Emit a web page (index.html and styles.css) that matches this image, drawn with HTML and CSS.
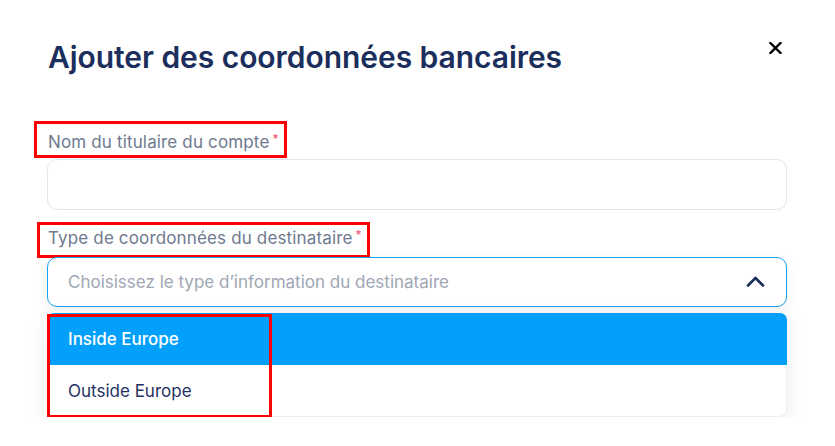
FILE: index.html
```html
<!DOCTYPE html>
<html lang="fr">
<head>
<meta charset="utf-8">
<title>Ajouter des coordonnées bancaires</title>
<link rel="stylesheet" href="styles.css">
</head>
<body>
<div class="modal">
  <div class="header">
    <h1 class="title">Ajouter des coordonnées bancaires</h1>
    <button class="close" aria-label="Fermer">
      <svg width="13" height="12" viewBox="0 0 13 12"><path d="M1.5 1 L11.5 11 M11.5 1 L1.5 11" stroke="#000" stroke-width="2.4" stroke-linecap="square"/></svg>
    </button>
  </div>

  <div class="field field-name">
    <span class="label label-one">Nom du titulaire du compte<span class="req">*</span></span>
    <div class="input"></div>
  </div>

  <div class="field field-type">
    <span class="label label-two">Type de coordonnées du destinataire<span class="req">*</span></span>
    <div class="select">
      <span class="placeholder">Choisissez le type d’information du destinataire</span>
      <svg class="chevron" width="19" height="11" viewBox="0 0 19 11"><path d="M2 9.5 L9.5 2 L17 9.5" fill="none" stroke="#1b2e5c" stroke-width="2.6" stroke-linecap="round" stroke-linejoin="round"/></svg>
    </div>
    <div class="menu">
      <div class="option active">Inside Europe</div>
      <div class="option">Outside Europe</div>
      <span class="mark"></span>
    </div>
  </div>
</div>
</body>
</html>
```

FILE: styles.css
```css
* { box-sizing: border-box; }
html, body { margin: 0; padding: 0; background: #ffffff; }
body { font-family: Inter, "Noto Sans", sans-serif; }

.modal {
  width: 835px;
  padding: 40px 48px 0 47px;
}

.header {
  display: flex;
  justify-content: space-between;
  align-items: flex-start;
}
.title {
  margin: 0 0 0 1px;
  font-size: 30px;
  line-height: 34px;
  font-weight: 600;
  color: #1b2e5c;
  letter-spacing: -0.05px;
}
.close {
  border: 0;
  background: none;
  padding: 0;
  margin: 2px 5px 0 0;
  width: 13px;
  height: 12px;
  display: block;
}
.close svg { display: block; }

.field { display: flex; flex-direction: column; align-items: flex-start; }
.field-name { margin-top: 47px; }
.field-type { margin-top: 12px; position: relative; }

.label {
  display: inline-block;
  border: 3px solid #ff0000;
  font-size: 17px;
  line-height: 20px;
  letter-spacing: 0.15px;
  color: #6d7a8f;
  white-space: nowrap;
}
.label-one { padding: 8px 5px 3px 11px; margin-left: -13px; }
.label-two { padding: 3px 5px 7px 8px; margin-left: -10px; }
.req {
  color: #f0506e;
  font-size: 12px;
  line-height: 0;
  position: relative;
  top: -5px;
  margin-left: 3px;
}

.input {
  margin-top: 1px;
  width: 740px;
  height: 51px;
  border: 1px solid #e3e5e9;
  border-radius: 10px;
  background: #fff;
}

.select {
  width: 740px;
  height: 50px;
  margin-top: -1px;
  border: 1px solid #16a2f6;
  border-radius: 10px;
  background: #fff;
  display: flex;
  align-items: center;
  justify-content: space-between;
  padding: 0 21px 0 20px;
  box-shadow: 0 4px 14px rgba(30, 40, 70, 0.06);
}
.placeholder {
  font-size: 17px;
  color: #a0a7b4;
}
.chevron { display: block; margin-top: -1px; }

.menu {
  position: relative;
  width: 740px;
  margin-top: 6px;
  border: 1px solid #eceef2;
  border-radius: 8px;
  background: #fff;
  box-shadow: 0 6px 24px rgba(30, 40, 70, 0.08);
}
.option {
  height: 51px;
  display: flex;
  align-items: center;
  padding-left: 20px;
  font-size: 17px;
  font-weight: 400;
  color: #1f3262;
}
.option.active {
  background: #03a0fb;
  color: #ffffff;
  font-weight: 500;
  border-radius: 7px 7px 0 0;
  margin: -1px -1px 0 -1px;
  padding-left: 21px;
  height: 52px;
}
.mark {
  position: absolute;
  left: -1px;
  top: 0;
  width: 225px;
  height: 104px;
  border: 3px solid #ff0000;
}
```
